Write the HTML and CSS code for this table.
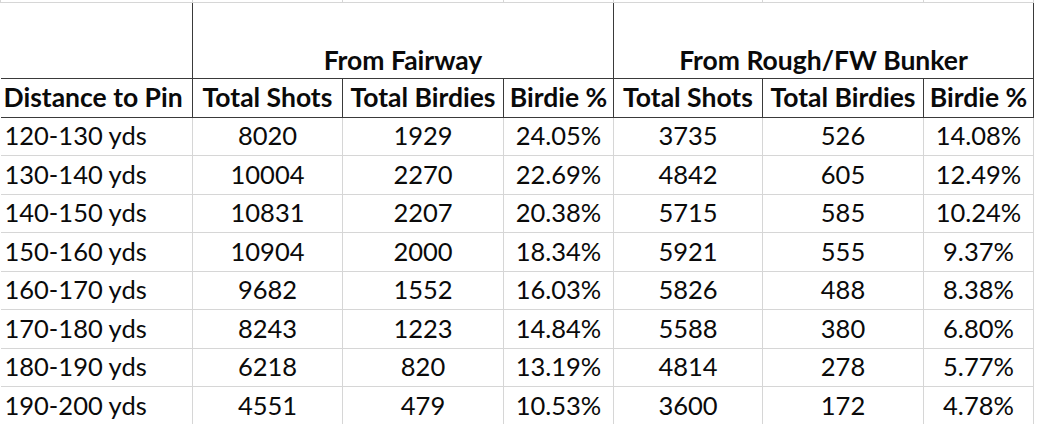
FILE: index.html
```html
<!DOCTYPE html>
<html>
<head>
<meta charset="utf-8">
<link rel="stylesheet" href="styles.css">
</head>
<body>
<table class="sheet">
  <colgroup>
    <col class="c-dist"><col class="c-shots"><col class="c-birdies"><col class="c-pct">
    <col class="c-shots2"><col class="c-birdies"><col class="c-pct">
  </colgroup>
  <thead>
    <tr class="stub"><td></td><td></td><td></td><td></td><td></td><td></td><td></td></tr>
    <tr class="group">
      <th class="blank"></th>
      <th colspan="3">From Fairway</th>
      <th colspan="3">From Rough/FW Bunker</th>
    </tr>
    <tr class="heads">
      <th class="left">Distance to Pin</th>
      <th>Total Shots</th><th>Total Birdies</th><th>Birdie %</th>
      <th>Total Shots</th><th>Total Birdies</th><th>Birdie %</th>
    </tr>
  </thead>
  <tbody>
    <tr><td class="left">120-130 yds</td><td>8020</td><td>1929</td><td>24.05%</td><td>3735</td><td>526</td><td>14.08%</td></tr>
    <tr><td class="left">130-140 yds</td><td>10004</td><td>2270</td><td>22.69%</td><td>4842</td><td>605</td><td>12.49%</td></tr>
    <tr><td class="left">140-150 yds</td><td>10831</td><td>2207</td><td>20.38%</td><td>5715</td><td>585</td><td>10.24%</td></tr>
    <tr><td class="left">150-160 yds</td><td>10904</td><td>2000</td><td>18.34%</td><td>5921</td><td>555</td><td>9.37%</td></tr>
    <tr><td class="left">160-170 yds</td><td>9682</td><td>1552</td><td>16.03%</td><td>5826</td><td>488</td><td>8.38%</td></tr>
    <tr><td class="left">170-180 yds</td><td>8243</td><td>1223</td><td>14.84%</td><td>5588</td><td>380</td><td>6.80%</td></tr>
    <tr><td class="left">180-190 yds</td><td>6218</td><td>820</td><td>13.19%</td><td>4814</td><td>278</td><td>5.77%</td></tr>
    <tr><td class="left">190-200 yds</td><td>4551</td><td>479</td><td>10.53%</td><td>3600</td><td>172</td><td>4.78%</td></tr>
  </tbody>
</table>
</body>
</html>
```

FILE: styles.css
```css
html, body {
  margin: 0;
  padding: 0;
  background: #ffffff;
}

.sheet {
  border-collapse: collapse;
  table-layout: fixed;
  width: 1034px;
  font-family: Lato, "Liberation Sans", sans-serif;
  font-size: 25.5px;
  line-height: 24px;
  color: #0a0a0a;
}

.c-dist { width: 192px; }
.c-shots { width: 150px; }
.c-birdies { width: 161px; }
.c-pct { width: 110px; }
.c-shots2 { width: 149px; }

.sheet td,
.sheet th {
  padding: 0 0 8px 0;
  text-align: center;
  vertical-align: bottom;
  white-space: nowrap;
  border: 1px solid #d6d6d6;
}

.sheet .left {
  text-align: left;
  padding-left: 4px;
}

.stub {
  height: 2px;
}

.stub td {
  padding: 0;
  border-top: none;
  line-height: 0;
  font-size: 0;
}

.group {
  height: 76px;
}

.group th {
  padding-bottom: 6px;
  font-weight: 700;
  font-size: 26.5px;
  border: 1px solid #3a3a3a;
  border-top-color: #d6d6d6;
}

.group th.blank {
  border-left: none;
}

.heads {
  height: 39px;
}

.heads th {
  padding-bottom: 8px;
  font-weight: 700;
  font-size: 26.5px;
  border: 1px solid #3a3a3a;
}

.heads th.left {
  border-left: none;
  padding-left: 3px;
}

tbody tr {
  height: 38.5px;
}

tbody td:first-child {
  border-left: none;
}
```
